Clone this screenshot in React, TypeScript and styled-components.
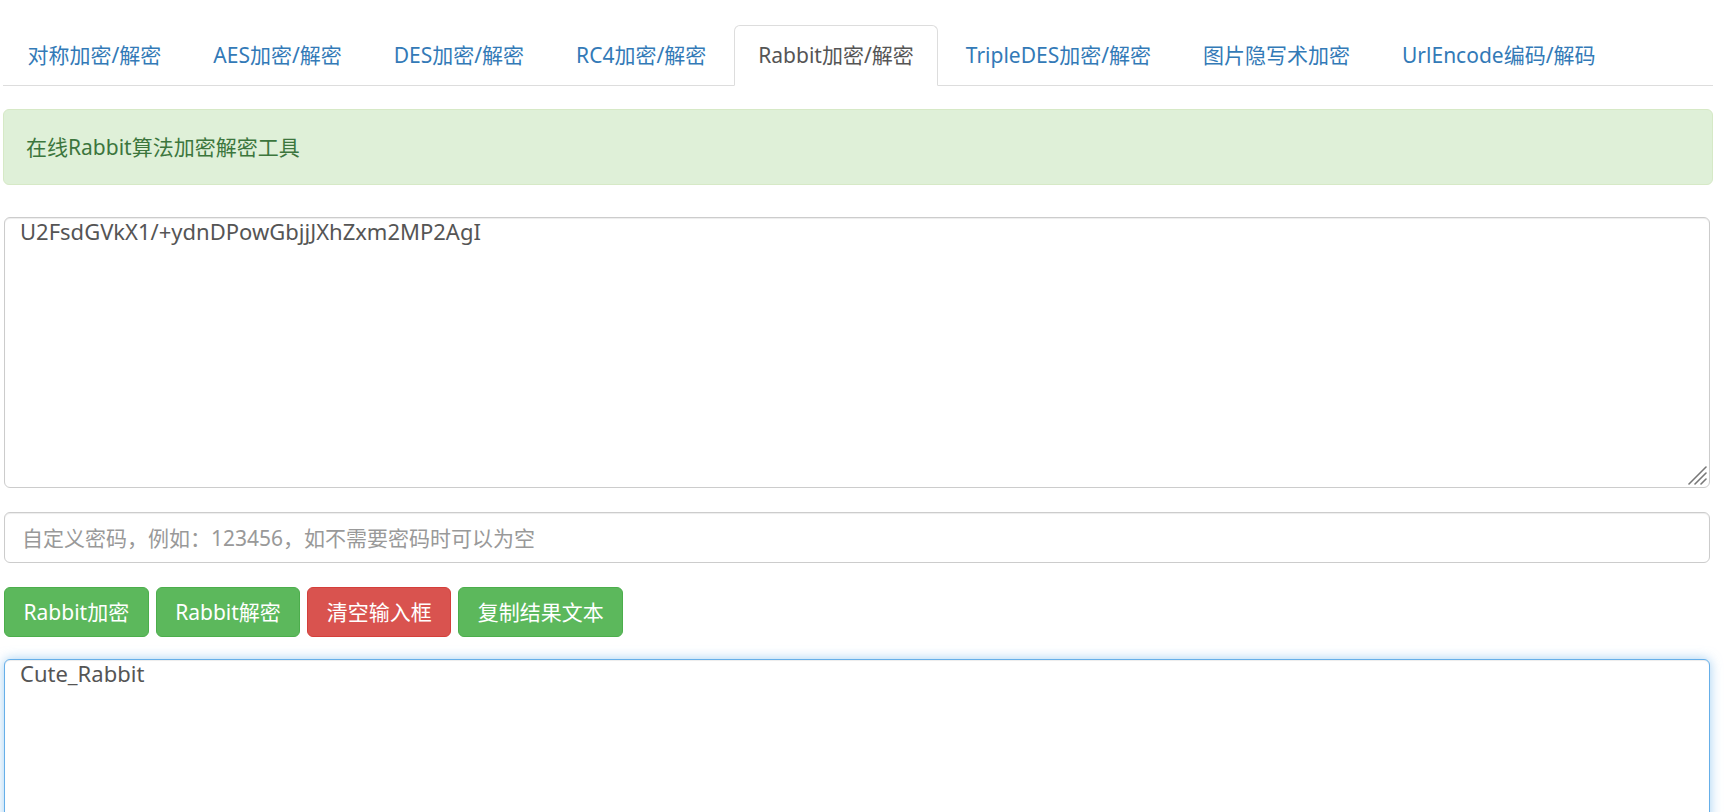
import React, { useEffect, useRef } from 'react'
import styled, { createGlobalStyle, css } from 'styled-components'

const GlobalStyle = createGlobalStyle`
  html, body {
    margin: 0;
    padding: 0;
    background: #fff;
  }
  body {
    font-family: "Noto Sans", "Noto Sans CJK SC", sans-serif;
    color: #333;
  }
  * {
    box-sizing: border-box;
  }
`

const TABS = [
  '对称加密/解密',
  'AES加密/解密',
  'DES加密/解密',
  'RC4加密/解密',
  'Rabbit加密/解密',
  'TripleDES加密/解密',
  '图片隐写术加密',
  'UrlEncode编码/解码',
]

const ACTIVE_TAB = 4
const RESULT = 'Cute_Rabbit'

const Page = styled.div`
  padding: 25px 15px 0 3px;
  height: 812px;
  overflow: hidden;
`

const TabBar = styled.ul`
  display: flex;
  list-style: none;
  margin: 0;
  padding: 0;
  border-bottom: 1px solid #ddd;
`

const TabItem = styled.li`
  margin: 0 3px -1px 0;
`

const TabLink = styled.a<{ $active?: boolean }>`
  display: block;
  padding: 14px 23.5px 15px;
  font-size: 21px;
  line-height: 30px;
  color: #337ab7;
  text-decoration: none;
  white-space: nowrap;
  border: 1px solid transparent;
  border-radius: 6px 6px 0 0;
  cursor: pointer;
  ${(p) =>
    p.$active &&
    css`
      color: #555;
      background: #fff;
      border-color: #ddd;
      border-bottom-color: transparent;
    `}
`

const Alert = styled.div`
  margin-top: 23px;
  padding: 23px 22px;
  font-size: 21px;
  line-height: 28px;
  color: #3c763d;
  background: #dff0d8;
  border: 1px solid #d6e9c6;
  border-radius: 6px;
`

const Form = styled.div`
  display: flex;
  flex-direction: column;
  margin: 0 3px 0 1px;
`

const Field = styled.div<{ $gap: number }>`
  position: relative;
  margin-top: ${(p) => p.$gap}px;
`

const TextBox = styled.textarea<{ $focused?: boolean }>`
  display: block;
  width: 100%;
  height: 271px;
  padding: 0 15px;
  font-family: inherit;
  font-size: 22px;
  line-height: 27px;
  color: #555;
  background: #fff;
  border: 1px solid #ccc;
  border-radius: 6px;
  box-shadow: inset 0 1px 1px rgba(0, 0, 0, 0.075);
  outline: none;
  resize: none;
  ${(p) =>
    p.$focused &&
    css`
      border-color: #66afe9;
      box-shadow: inset 0 1px 1px rgba(0, 0, 0, 0.075),
        0 0 12px rgba(102, 175, 233, 0.6);
    `}
`

const Grip = styled.svg`
  position: absolute;
  right: 3px;
  bottom: 3px;
  width: 20px;
  height: 20px;
  pointer-events: none;
`

const KeyInput = styled.input`
  display: block;
  width: 100%;
  height: 51px;
  margin-top: 24px;
  padding: 0 17px;
  font-family: inherit;
  font-size: 21px;
  color: #555;
  border: 1px solid #ccc;
  border-radius: 6px;
  box-shadow: inset 0 1px 1px rgba(0, 0, 0, 0.075);
  outline: none;
  &::placeholder {
    color: #999;
  }
`

const ButtonRow = styled.div`
  display: flex;
  gap: 7px;
  margin-top: 24px;
`

const Button = styled.button<{ $tone: 'success' | 'danger' }>`
  height: 50px;
  padding: 9px 18.5px;
  font-family: inherit;
  font-size: 21px;
  line-height: 30px;
  color: #fff;
  border: 1px solid;
  border-radius: 6px;
  cursor: pointer;
  white-space: nowrap;
  background: ${(p) => (p.$tone === 'danger' ? '#d9534f' : '#5cb85c')};
  border-color: ${(p) => (p.$tone === 'danger' ? '#d43f3a' : '#4cae4c')};
`

const ResizeGrip = () => (
  <Grip viewBox="0 0 20 20">
    <g stroke="#777" strokeWidth="1.6" strokeLinecap="round">
      <line x1="19" y1="2" x2="2" y2="19" />
      <line x1="19" y1="8" x2="8" y2="19" />
      <line x1="19" y1="14" x2="14" y2="19" />
    </g>
  </Grip>
)

export default function App() {
  const resultRef = useRef<HTMLTextAreaElement>(null)

  useEffect(() => {
    const el = resultRef.current
    if (el) {
      el.focus()
      el.setSelectionRange(RESULT.length, RESULT.length)
    }
  }, [])

  return (
    <Page>
      <GlobalStyle />
      <TabBar>
        {TABS.map((label, i) => (
          <TabItem key={label}>
            <TabLink $active={i === ACTIVE_TAB}>{label}</TabLink>
          </TabItem>
        ))}
      </TabBar>
      <Alert>在线Rabbit算法加密解密工具</Alert>
      <Form>
        <Field $gap={32}>
          <TextBox defaultValue="U2FsdGVkX1/+ydnDPowGbjjJXhZxm2MP2AgI" />
          <ResizeGrip />
        </Field>
        <KeyInput placeholder="自定义密码，例如：123456，如不需要密码时可以为空" />
        <ButtonRow>
          <Button $tone="success">Rabbit加密</Button>
          <Button $tone="success">Rabbit解密</Button>
          <Button $tone="danger">清空输入框</Button>
          <Button $tone="success">复制结果文本</Button>
        </ButtonRow>
        <Field $gap={22}>
          <TextBox ref={resultRef} $focused defaultValue={RESULT} />
        </Field>
      </Form>
    </Page>
  )
}
